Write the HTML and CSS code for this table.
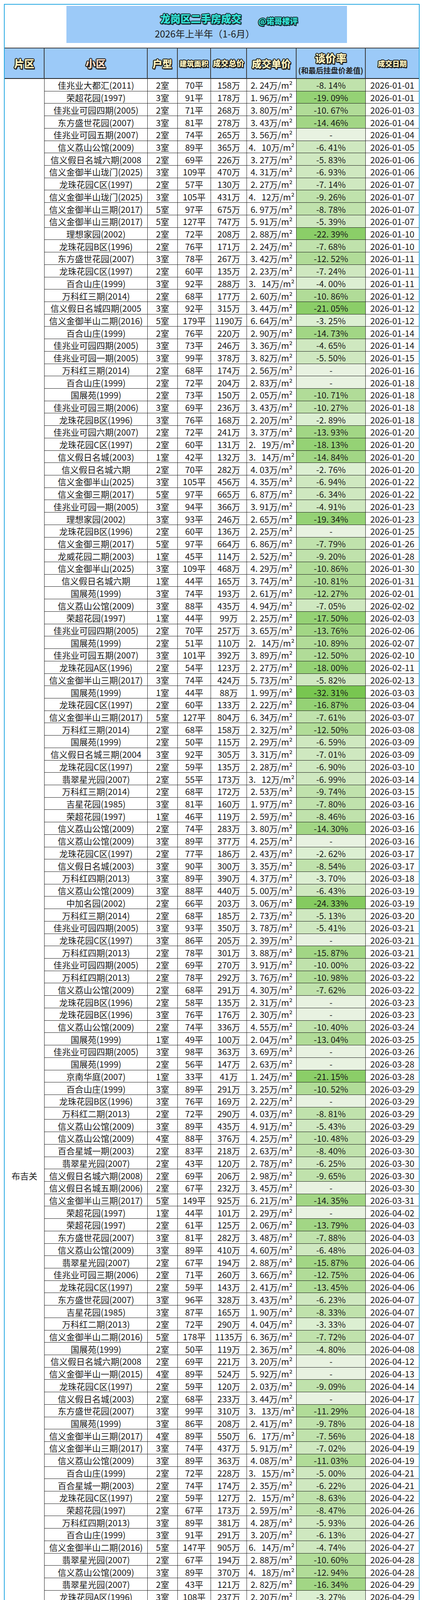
FILE: index.html
```html
<!DOCTYPE html>
<html lang="zh-CN">
<head>
<meta charset="utf-8">
<title>龙岗区二手房成交</title>
<link rel="stylesheet" href="styles.css">
</head>
<body>
<div class="page">
<div class="frame">
<div class="title-area">
  <div class="title-box">
    <div class="title-row"><span class="title">龙岗区二手房成交</span><span class="handle">@诺哥楼评</span></div>
    <div class="subtitle">2026年上半年（1-6月）</div>
  </div>
</div>
<table class="deals">
<thead>
<tr>
<th><span class="hl h26">片区</span></th>
<th><span class="hl h26 pink">小区</span></th>
<th><span class="hl h25">户型</span></th>
<th><span class="hl h18">建筑面积</span></th>
<th><span class="hl h20">成交总价</span></th>
<th><span class="hl h25">成交单价</span></th>
<th class="stack"><span class="hl h27">谈价率</span><span class="hsub">(和最后挂盘价差值)</span></th>
<th class="last"><span class="hl h18">成交日期</span></th>
</tr>
</thead>
<tbody>
<tr><td class="zone" rowspan="177">布吉关</td><td>佳兆业大都汇(2011)</td><td>2室</td><td>70平</td><td>158万</td><td>2. 24万/m²</td><td class="r3">-8. 14%</td><td class="last">2026-01-01</td></tr>
<tr><td>荣超花园(1997)</td><td>3室</td><td>91平</td><td>178万</td><td>1. 96万/m²</td><td class="r6">-19. 09%</td><td class="last">2026-01-01</td></tr>
<tr><td>佳兆业可园四期(2005)</td><td>2室</td><td>71平</td><td>268万</td><td>3. 80万/m²</td><td class="r4">-10. 67%</td><td class="last">2026-01-03</td></tr>
<tr><td>东方盛世花园(2007)</td><td>3室</td><td>81平</td><td>278万</td><td>3. 43万/m²</td><td class="r5">-14. 46%</td><td class="last">2026-01-04</td></tr>
<tr><td>佳兆业可园五期(2007)</td><td>2室</td><td>74平</td><td>265万</td><td>3. 56万/m²</td><td class="rn">-</td><td class="last">2026-01-04</td></tr>
<tr><td>信义荔山公馆(2009)</td><td>3室</td><td>89平</td><td>365万</td><td>4.&nbsp;&nbsp;&nbsp;10万/m²</td><td class="r2">-6. 41%</td><td class="last">2026-01-05</td></tr>
<tr><td>信义假日名城六期(2008</td><td>2室</td><td>69平</td><td>226万</td><td>3. 27万/m²</td><td class="r2">-5. 83%</td><td class="last">2026-01-06</td></tr>
<tr><td>信义金御半山珑门(2025)</td><td>3室</td><td>109平</td><td>470万</td><td>4. 31万/m²</td><td class="r2">-6. 93%</td><td class="last">2026-01-06</td></tr>
<tr><td>龙珠花园C区(1997)</td><td>2室</td><td>57平</td><td>130万</td><td>2. 27万/m²</td><td class="r2">-7. 14%</td><td class="last">2026-01-07</td></tr>
<tr><td>信义金御半山珑门(2025)</td><td>3室</td><td>105平</td><td>431万</td><td>4.&nbsp;&nbsp;&nbsp;12万/m²</td><td class="r3">-9. 26%</td><td class="last">2026-01-07</td></tr>
<tr><td>信义金御半山三期(2017)</td><td>5室</td><td>97平</td><td>675万</td><td>6. 97万/m²</td><td class="r3">-8. 78%</td><td class="last">2026-01-07</td></tr>
<tr><td>信义金御半山三期(2017)</td><td>5室</td><td>127平</td><td>747万</td><td>5. 91万/m²</td><td class="r2">-5. 39%</td><td class="last">2026-01-07</td></tr>
<tr><td>理想家园(2002)</td><td>2室</td><td>72平</td><td>208万</td><td>2. 88万/m²</td><td class="r7">-22. 39%</td><td class="last">2026-01-10</td></tr>
<tr><td>龙珠花园B区(1996)</td><td>2室</td><td>76平</td><td>171万</td><td>2. 24万/m²</td><td class="r3">-7. 68%</td><td class="last">2026-01-10</td></tr>
<tr><td>东方盛世花园(2007)</td><td>3室</td><td>78平</td><td>267万</td><td>3. 42万/m²</td><td class="r4">-12. 52%</td><td class="last">2026-01-11</td></tr>
<tr><td>龙珠花园C区(1997)</td><td>2室</td><td>60平</td><td>135万</td><td>2. 23万/m²</td><td class="r2">-7. 24%</td><td class="last">2026-01-11</td></tr>
<tr><td>百合山庄(1999)</td><td>3室</td><td>92平</td><td>288万</td><td>3.&nbsp;&nbsp;&nbsp;14万/m²</td><td class="r1">-4. 00%</td><td class="last">2026-01-11</td></tr>
<tr><td>万科红三期(2014)</td><td>2室</td><td>68平</td><td>177万</td><td>2. 60万/m²</td><td class="r4">-10. 86%</td><td class="last">2026-01-12</td></tr>
<tr><td>信义假日名城四期(2005</td><td>3室</td><td>92平</td><td>315万</td><td>3. 44万/m²</td><td class="r7">-21. 05%</td><td class="last">2026-01-12</td></tr>
<tr><td>信义金御半山二期(2016)</td><td>5室</td><td>179平</td><td>1190万</td><td>6. 64万/m²</td><td class="r1">-3. 25%</td><td class="last">2026-01-12</td></tr>
<tr><td>百合山庄(1999)</td><td>2室</td><td>76平</td><td>220万</td><td>2. 90万/m²</td><td class="r5">-14. 73%</td><td class="last">2026-01-14</td></tr>
<tr><td>佳兆业可园四期(2005)</td><td>3室</td><td>73平</td><td>246万</td><td>3. 36万/m²</td><td class="r2">-4. 65%</td><td class="last">2026-01-14</td></tr>
<tr><td>佳兆业可园一期(2005)</td><td>3室</td><td>99平</td><td>378万</td><td>3. 82万/m²</td><td class="r2">-5. 50%</td><td class="last">2026-01-15</td></tr>
<tr><td>万科红三期(2014)</td><td>2室</td><td>68平</td><td>174万</td><td>2. 56万/m²</td><td class="rn">-</td><td class="last">2026-01-16</td></tr>
<tr><td>百合山庄(1999)</td><td>2室</td><td>72平</td><td>204万</td><td>2. 83万/m²</td><td class="rn">-</td><td class="last">2026-01-18</td></tr>
<tr><td>国展苑(1999)</td><td>2室</td><td>73平</td><td>150万</td><td>2. 05万/m²</td><td class="r4">-10. 71%</td><td class="last">2026-01-18</td></tr>
<tr><td>佳兆业可园三期(2006)</td><td>3室</td><td>69平</td><td>236万</td><td>3. 43万/m²</td><td class="r3">-10. 27%</td><td class="last">2026-01-18</td></tr>
<tr><td>龙珠花园B区(1996)</td><td>3室</td><td>76平</td><td>168万</td><td>2. 20万/m²</td><td class="r1">-2. 89%</td><td class="last">2026-01-18</td></tr>
<tr><td>佳兆业可园六期(2007)</td><td>2室</td><td>72平</td><td>241万</td><td>3. 37万/m²</td><td class="r5">-13. 93%</td><td class="last">2026-01-20</td></tr>
<tr><td>龙珠花园C区(1997)</td><td>2室</td><td>60平</td><td>131万</td><td>2.&nbsp;&nbsp;&nbsp;19万/m²</td><td class="r6">-18. 13%</td><td class="last">2026-01-20</td></tr>
<tr><td>信义假日名城(2003)</td><td>1室</td><td>42平</td><td>132万</td><td>3.&nbsp;&nbsp;&nbsp;14万/m²</td><td class="r5">-14. 84%</td><td class="last">2026-01-20</td></tr>
<tr><td>信义假日名城六期</td><td>2室</td><td>70平</td><td>282万</td><td>4. 03万/m²</td><td class="r1">-2. 76%</td><td class="last">2026-01-20</td></tr>
<tr><td>信义金御半山(2025)</td><td>3室</td><td>105平</td><td>456万</td><td>4. 35万/m²</td><td class="r2">-6. 94%</td><td class="last">2026-01-22</td></tr>
<tr><td>信义金御三期(2017)</td><td>5室</td><td>97平</td><td>665万</td><td>6. 87万/m²</td><td class="r2">-6. 34%</td><td class="last">2026-01-22</td></tr>
<tr><td>佳兆业可园一期(2005)</td><td>3室</td><td>94平</td><td>366万</td><td>3. 91万/m²</td><td class="r2">-4. 91%</td><td class="last">2026-01-23</td></tr>
<tr><td>理想家园(2002)</td><td>3室</td><td>93平</td><td>246万</td><td>2. 65万/m²</td><td class="r6">-19. 34%</td><td class="last">2026-01-23</td></tr>
<tr><td>龙珠花园B区(1996)</td><td>2室</td><td>60平</td><td>136万</td><td>2. 25万/m²</td><td class="rn">-</td><td class="last">2026-01-25</td></tr>
<tr><td>信义金御三期(2017)</td><td>5室</td><td>97平</td><td>664万</td><td>6. 86万/m²</td><td class="r3">-7. 79%</td><td class="last">2026-01-26</td></tr>
<tr><td>龙威花园二期(2003)</td><td>1室</td><td>45平</td><td>114万</td><td>2. 52万/m²</td><td class="r3">-9. 20%</td><td class="last">2026-01-28</td></tr>
<tr><td>信义金御半山(2025)</td><td>3室</td><td>109平</td><td>468万</td><td>4. 29万/m²</td><td class="r4">-10. 86%</td><td class="last">2026-01-30</td></tr>
<tr><td>信义假日名城六期</td><td>1室</td><td>44平</td><td>165万</td><td>3. 74万/m²</td><td class="r4">-10. 81%</td><td class="last">2026-01-31</td></tr>
<tr><td>国展苑(1999)</td><td>3室</td><td>74平</td><td>193万</td><td>2. 61万/m²</td><td class="r4">-12. 27%</td><td class="last">2026-02-01</td></tr>
<tr><td>信义荔山公馆(2009)</td><td>3室</td><td>88平</td><td>435万</td><td>4. 94万/m²</td><td class="r2">-7. 05%</td><td class="last">2026-02-02</td></tr>
<tr><td>荣超花园(1997)</td><td>1室</td><td>44平</td><td>99万</td><td>2. 25万/m²</td><td class="r6">-17. 50%</td><td class="last">2026-02-03</td></tr>
<tr><td>佳兆业可园四期(2005)</td><td>2室</td><td>70平</td><td>257万</td><td>3. 65万/m²</td><td class="r5">-13. 76%</td><td class="last">2026-02-06</td></tr>
<tr><td>国展苑(1999)</td><td>2室</td><td>51平</td><td>110万</td><td>2.&nbsp;&nbsp;&nbsp;14万/m²</td><td class="r4">-10. 89%</td><td class="last">2026-02-07</td></tr>
<tr><td>佳兆业可园五期(2007)</td><td>3室</td><td>101平</td><td>392万</td><td>3. 89万/m²</td><td class="r4">-12. 50%</td><td class="last">2026-02-10</td></tr>
<tr><td>龙珠花园A区(1996)</td><td>2室</td><td>54平</td><td>123万</td><td>2. 27万/m²</td><td class="r6">-18. 00%</td><td class="last">2026-02-11</td></tr>
<tr><td>信义金御半山三期(2017)</td><td>3室</td><td>74平</td><td>424万</td><td>5. 73万/m²</td><td class="r2">-5. 82%</td><td class="last">2026-02-13</td></tr>
<tr><td>国展苑(1999)</td><td>1室</td><td>44平</td><td>88万</td><td>1. 99万/m²</td><td class="r11">-32. 31%</td><td class="last">2026-03-03</td></tr>
<tr><td>龙珠花园C区(1997)</td><td>2室</td><td>60平</td><td>133万</td><td>2. 22万/m²</td><td class="r6">-16. 87%</td><td class="last">2026-03-04</td></tr>
<tr><td>信义金御半山三期(2017)</td><td>5室</td><td>127平</td><td>804万</td><td>6. 34万/m²</td><td class="r3">-7. 61%</td><td class="last">2026-03-07</td></tr>
<tr><td>万科红三期(2014)</td><td>2室</td><td>68平</td><td>158万</td><td>2. 32万/m²</td><td class="r4">-12. 50%</td><td class="last">2026-03-08</td></tr>
<tr><td>国展苑(1999)</td><td>2室</td><td>50平</td><td>115万</td><td>2. 29万/m²</td><td class="r2">-6. 59%</td><td class="last">2026-03-09</td></tr>
<tr><td>信义假日名城三期(2004</td><td>3室</td><td>92平</td><td>305万</td><td>3. 31万/m²</td><td class="r2">-7. 01%</td><td class="last">2026-03-09</td></tr>
<tr><td>龙珠花园C区(1997)</td><td>2室</td><td>59平</td><td>135万</td><td>2. 28万/m²</td><td class="r2">-6. 90%</td><td class="last">2026-03-10</td></tr>
<tr><td>翡翠星光园(2007)</td><td>2室</td><td>55平</td><td>173万</td><td>3.&nbsp;&nbsp;&nbsp;12万/m²</td><td class="r2">-6. 99%</td><td class="last">2026-03-14</td></tr>
<tr><td>万科红三期(2014)</td><td>2室</td><td>68平</td><td>172万</td><td>2. 53万/m²</td><td class="r3">-9. 74%</td><td class="last">2026-03-15</td></tr>
<tr><td>吉星花园(1985)</td><td>3室</td><td>81平</td><td>160万</td><td>1. 97万/m²</td><td class="r3">-7. 80%</td><td class="last">2026-03-16</td></tr>
<tr><td>荣超花园(1997)</td><td>1室</td><td>46平</td><td>119万</td><td>2. 59万/m²</td><td class="r3">-8. 46%</td><td class="last">2026-03-16</td></tr>
<tr><td>信义荔山公馆(2009)</td><td>2室</td><td>74平</td><td>283万</td><td>3. 80万/m²</td><td class="r5">-14. 30%</td><td class="last">2026-03-16</td></tr>
<tr><td>信义荔山公馆(2009)</td><td>3室</td><td>89平</td><td>377万</td><td>4. 25万/m²</td><td class="rn">-</td><td class="last">2026-03-16</td></tr>
<tr><td>龙珠花园C区(1997)</td><td>2室</td><td>77平</td><td>186万</td><td>2. 43万/m²</td><td class="r1">-2. 62%</td><td class="last">2026-03-17</td></tr>
<tr><td>信义假日名城(2003)</td><td>3室</td><td>90平</td><td>300万</td><td>3. 35万/m²</td><td class="r3">-8. 54%</td><td class="last">2026-03-17</td></tr>
<tr><td>万科红四期(2013)</td><td>3室</td><td>89平</td><td>390万</td><td>4. 37万/m²</td><td class="r1">-3. 70%</td><td class="last">2026-03-18</td></tr>
<tr><td>信义荔山公馆(2009)</td><td>3室</td><td>88平</td><td>440万</td><td>5. 00万/m²</td><td class="r2">-6. 43%</td><td class="last">2026-03-19</td></tr>
<tr><td>中加名园(2002)</td><td>2室</td><td>66平</td><td>203万</td><td>3. 06万/m²</td><td class="r8">-24. 33%</td><td class="last">2026-03-19</td></tr>
<tr><td>万科红三期(2014)</td><td>2室</td><td>68平</td><td>185万</td><td>2. 73万/m²</td><td class="r2">-5. 13%</td><td class="last">2026-03-20</td></tr>
<tr><td>佳兆业可园四期(2005)</td><td>3室</td><td>93平</td><td>350万</td><td>3. 78万/m²</td><td class="r2">-5. 41%</td><td class="last">2026-03-21</td></tr>
<tr><td>龙珠花园C区(1997)</td><td>3室</td><td>86平</td><td>205万</td><td>2. 39万/m²</td><td class="rn">-</td><td class="last">2026-03-21</td></tr>
<tr><td>万科红四期(2013)</td><td>2室</td><td>78平</td><td>301万</td><td>3. 88万/m²</td><td class="r5">-15. 87%</td><td class="last">2026-03-21</td></tr>
<tr><td>佳兆业可园四期(2005)</td><td>2室</td><td>69平</td><td>270万</td><td>3. 91万/m²</td><td class="r3">-10. 00%</td><td class="last">2026-03-22</td></tr>
<tr><td>万科红四期(2013)</td><td>2室</td><td>78平</td><td>292万</td><td>3. 76万/m²</td><td class="r4">-10. 98%</td><td class="last">2026-03-22</td></tr>
<tr><td>信义荔山公馆(2009)</td><td>2室</td><td>68平</td><td>291万</td><td>4. 30万/m²</td><td class="r3">-7. 62%</td><td class="last">2026-03-22</td></tr>
<tr><td>龙珠花园B区(1996)</td><td>2室</td><td>58平</td><td>135万</td><td>2. 31万/m²</td><td class="rn">-</td><td class="last">2026-03-23</td></tr>
<tr><td>龙珠花园B区(1996)</td><td>3室</td><td>76平</td><td>176万</td><td>2. 30万/m²</td><td class="rn">-</td><td class="last">2026-03-23</td></tr>
<tr><td>信义荔山公馆(2009)</td><td>2室</td><td>74平</td><td>336万</td><td>4. 55万/m²</td><td class="r3">-10. 40%</td><td class="last">2026-03-24</td></tr>
<tr><td>国展苑(1999)</td><td>1室</td><td>49平</td><td>100万</td><td>2. 04万/m²</td><td class="r4">-13. 04%</td><td class="last">2026-03-25</td></tr>
<tr><td>佳兆业可园四期(2005)</td><td>3室</td><td>98平</td><td>363万</td><td>3. 69万/m²</td><td class="rn">-</td><td class="last">2026-03-26</td></tr>
<tr><td>国展苑(1999)</td><td>2室</td><td>56平</td><td>147万</td><td>2. 63万/m²</td><td class="rn">-</td><td class="last">2026-03-28</td></tr>
<tr><td>京南华庭(2007)</td><td>1室</td><td>33平</td><td>41万</td><td>1. 24万/m²</td><td class="r7">-21. 15%</td><td class="last">2026-03-28</td></tr>
<tr><td>百合山庄(1999)</td><td>3室</td><td>89平</td><td>291万</td><td>3. 25万/m²</td><td class="r4">-10. 52%</td><td class="last">2026-03-29</td></tr>
<tr><td>龙珠花园B区(1996)</td><td>3室</td><td>76平</td><td>169万</td><td>2. 22万/m²</td><td class="rn">-</td><td class="last">2026-03-29</td></tr>
<tr><td>万科红二期(2013)</td><td>2室</td><td>72平</td><td>290万</td><td>4. 03万/m²</td><td class="r3">-8. 81%</td><td class="last">2026-03-29</td></tr>
<tr><td>信义荔山公馆(2009)</td><td>3室</td><td>89平</td><td>435万</td><td>4. 91万/m²</td><td class="r2">-5. 43%</td><td class="last">2026-03-29</td></tr>
<tr><td>信义荔山公馆(2009)</td><td>4室</td><td>88平</td><td>376万</td><td>4. 25万/m²</td><td class="r3">-10. 48%</td><td class="last">2026-03-29</td></tr>
<tr><td>百合星城一期(2003)</td><td>2室</td><td>83平</td><td>218万</td><td>2. 63万/m²</td><td class="r3">-8. 40%</td><td class="last">2026-03-30</td></tr>
<tr><td>翡翠星光园(2007)</td><td>2室</td><td>43平</td><td>120万</td><td>2. 78万/m²</td><td class="r2">-6. 25%</td><td class="last">2026-03-30</td></tr>
<tr><td>信义假日名城六期(2008)</td><td>2室</td><td>69平</td><td>206万</td><td>2. 98万/m²</td><td class="r3">-9. 65%</td><td class="last">2026-03-30</td></tr>
<tr><td>信义假日名城五期(2006)</td><td>2室</td><td>67平</td><td>232万</td><td>3. 45万/m²</td><td class="rn">-</td><td class="last">2026-03-30</td></tr>
<tr><td>信义金御半山三期(2017)</td><td>5室</td><td>149平</td><td>925万</td><td>6. 21万/m²</td><td class="r5">-14. 35%</td><td class="last">2026-03-31</td></tr>
<tr><td>荣超花园(1997)</td><td>1室</td><td>44平</td><td>101万</td><td>2. 29万/m²</td><td class="rn">-</td><td class="last">2026-04-02</td></tr>
<tr><td>荣超花园(1997)</td><td>2室</td><td>61平</td><td>125万</td><td>2. 06万/m²</td><td class="r5">-13. 79%</td><td class="last">2026-04-03</td></tr>
<tr><td>东方盛世花园(2007)</td><td>3室</td><td>81平</td><td>282万</td><td>3. 48万/m²</td><td class="r3">-7. 88%</td><td class="last">2026-04-03</td></tr>
<tr><td>信义荔山公馆(2009)</td><td>3室</td><td>89平</td><td>410万</td><td>4. 60万/m²</td><td class="r2">-6. 48%</td><td class="last">2026-04-03</td></tr>
<tr><td>翡翠星光园(2007)</td><td>2室</td><td>67平</td><td>194万</td><td>2. 88万/m²</td><td class="r5">-15. 87%</td><td class="last">2026-04-06</td></tr>
<tr><td>佳兆业可园三期(2006)</td><td>2室</td><td>71平</td><td>260万</td><td>3. 66万/m²</td><td class="r4">-12. 75%</td><td class="last">2026-04-06</td></tr>
<tr><td>龙珠花园C区(1997)</td><td>2室</td><td>59平</td><td>143万</td><td>2. 41万/m²</td><td class="r4">-13. 45%</td><td class="last">2026-04-06</td></tr>
<tr><td>东方盛世花园(2007)</td><td>3室</td><td>96平</td><td>328万</td><td>3. 43万/m²</td><td class="r2">-6. 23%</td><td class="last">2026-04-07</td></tr>
<tr><td>吉星花园(1985)</td><td>3室</td><td>87平</td><td>165万</td><td>1. 90万/m²</td><td class="r3">-8. 33%</td><td class="last">2026-04-07</td></tr>
<tr><td>万科红二期(2013)</td><td>2室</td><td>72平</td><td>290万</td><td>4. 04万/m²</td><td class="r1">-3. 33%</td><td class="last">2026-04-07</td></tr>
<tr><td>信义金御半山二期(2016)</td><td>5室</td><td>178平</td><td>1135万</td><td>6. 36万/m²</td><td class="r3">-7. 72%</td><td class="last">2026-04-07</td></tr>
<tr><td>国展苑(1999)</td><td>2室</td><td>50平</td><td>119万</td><td>2. 36万/m²</td><td class="r2">-4. 80%</td><td class="last">2026-04-08</td></tr>
<tr><td>信义假日名城六期(2008</td><td>2室</td><td>69平</td><td>221万</td><td>3. 20万/m²</td><td class="rn">-</td><td class="last">2026-04-12</td></tr>
<tr><td>信义金御半山一期(2015)</td><td>4室</td><td>89平</td><td>524万</td><td>5. 92万/m²</td><td class="rn">-</td><td class="last">2026-04-13</td></tr>
<tr><td>龙珠花园C区(1997)</td><td>2室</td><td>59平</td><td>120万</td><td>2. 03万/m²</td><td class="r3">-9. 09%</td><td class="last">2026-04-14</td></tr>
<tr><td>信义假日名城(2003)</td><td>2室</td><td>68平</td><td>233万</td><td>3. 44万/m²</td><td class="rn">-</td><td class="last">2026-04-17</td></tr>
<tr><td>东方盛世花园(2007)</td><td>3室</td><td>99平</td><td>310万</td><td>3.&nbsp;&nbsp;&nbsp;13万/m²</td><td class="r4">-11. 29%</td><td class="last">2026-04-18</td></tr>
<tr><td>国展苑(1999)</td><td>3室</td><td>86平</td><td>208万</td><td>2. 41万/m²</td><td class="r3">-9. 78%</td><td class="last">2026-04-18</td></tr>
<tr><td>信义金御半山三期(2017)</td><td>4室</td><td>89平</td><td>550万</td><td>6.&nbsp;&nbsp;&nbsp;17万/m²</td><td class="r3">-7. 56%</td><td class="last">2026-04-18</td></tr>
<tr><td>信义金御半山三期(2017)</td><td>3室</td><td>74平</td><td>437万</td><td>5. 91万/m²</td><td class="r2">-7. 02%</td><td class="last">2026-04-19</td></tr>
<tr><td>信义荔山公馆(2009)</td><td>3室</td><td>89平</td><td>363万</td><td>4. 08万/m²</td><td class="r4">-11. 03%</td><td class="last">2026-04-19</td></tr>
<tr><td>百合山庄(1999)</td><td>2室</td><td>72平</td><td>228万</td><td>3.&nbsp;&nbsp;&nbsp;15万/m²</td><td class="r2">-5. 00%</td><td class="last">2026-04-21</td></tr>
<tr><td>百合星城一期(2003)</td><td>2室</td><td>74平</td><td>174万</td><td>2. 35万/m²</td><td class="r2">-6. 22%</td><td class="last">2026-04-21</td></tr>
<tr><td>龙珠花园C区(1997)</td><td>2室</td><td>59平</td><td>127万</td><td>2.&nbsp;&nbsp;&nbsp;15万/m²</td><td class="r3">-8. 63%</td><td class="last">2026-04-22</td></tr>
<tr><td>荣超花园(1997)</td><td>2室</td><td>67平</td><td>173万</td><td>2. 59万/m²</td><td class="r3">-8. 47%</td><td class="last">2026-04-26</td></tr>
<tr><td>万科红四期(2013)</td><td>3室</td><td>89平</td><td>381万</td><td>4. 28万/m²</td><td class="r2">-5. 93%</td><td class="last">2026-04-26</td></tr>
<tr><td>百合山庄(1999)</td><td>3室</td><td>91平</td><td>291万</td><td>3. 20万/m²</td><td class="r2">-6. 13%</td><td class="last">2026-04-27</td></tr>
<tr><td>信义金御半山二期(2016)</td><td>5室</td><td>147平</td><td>905万</td><td>6.&nbsp;&nbsp;&nbsp;14万/m²</td><td class="r2">-4. 74%</td><td class="last">2026-04-27</td></tr>
<tr><td>翡翠星光园(2007)</td><td>2室</td><td>67平</td><td>194万</td><td>2. 88万/m²</td><td class="r4">-10. 60%</td><td class="last">2026-04-28</td></tr>
<tr><td>信义荔山公馆(2009)</td><td>3室</td><td>89平</td><td>370万</td><td>4.&nbsp;&nbsp;&nbsp;18万/m²</td><td class="r4">-12. 94%</td><td class="last">2026-04-28</td></tr>
<tr><td>翡翠星光园(2007)</td><td>2室</td><td>43平</td><td>121万</td><td>2. 82万/m²</td><td class="r5">-16. 34%</td><td class="last">2026-04-29</td></tr>
<tr><td>龙珠花园A区(1996)</td><td>3室</td><td>108平</td><td>237万</td><td>2. 20万/m²</td><td class="r1">-3. 27%</td><td class="last">2026-04-29</td></tr>
<tr><td>龙珠花园A区(1996)</td><td>3室</td><td>78平</td><td>181万</td><td>2. 32万/m²</td><td class="r4">-12. 98%</td><td class="last">2026-04-30</td></tr>
<tr><td>荣超花园(1997)</td><td>2室</td><td>57平</td><td>146万</td><td>2. 54万/m²</td><td class="r2">-5. 81%</td><td class="last">2026-04-30</td></tr>
<tr><td>国展苑(1999)</td><td>3室</td><td>86平</td><td>191万</td><td>2. 22万/m²</td><td class="r6">-18. 81%</td><td class="last">2026-05-01</td></tr>
<tr><td>佳兆业可园一期(2005)</td><td>4室</td><td>70平</td><td>278万</td><td>3. 99万/m²</td><td class="r4">-12. 58%</td><td class="last">2026-05-01</td></tr>
<tr><td>东方盛世花园(2007)</td><td>4室</td><td>96平</td><td>320万</td><td>3. 33万/m²</td><td class="r7">-20. 00%</td><td class="last">2026-05-02</td></tr>
<tr><td>信义金御半山一期(2015)</td><td>5室</td><td>143平</td><td>973万</td><td>6. 80万/m²</td><td class="rn">-</td><td class="last">2026-05-04</td></tr>
<tr><td>万科红一期(2011)</td><td>2室</td><td>62平</td><td>239万</td><td>3. 87万/m²</td><td class="r2">-7. 20%</td><td class="last">2026-05-07</td></tr>
<tr><td>百合星城一期(2003)</td><td>3室</td><td>94平</td><td>261万</td><td>2. 77万/m²</td><td class="r2">-5. 09%</td><td class="last">2026-05-10</td></tr>
<tr><td>东方盛世花园(2007)</td><td>2室</td><td>68平</td><td>213万</td><td>3.&nbsp;&nbsp;&nbsp;15万/m²</td><td class="r4">-10. 88%</td><td class="last">2026-05-10</td></tr>
<tr><td>龙珠花园B区(1996)</td><td>3室</td><td>76平</td><td>178万</td><td>2. 33万/m²</td><td class="r3">-8. 72%</td><td class="last">2026-05-10</td></tr>
<tr><td>信义假日名城四期(2005</td><td>2室</td><td>71平</td><td>253万</td><td>3. 58万/m²</td><td class="r2">-5. 60%</td><td class="last">2026-05-10</td></tr>
<tr><td>佳兆业可园五期(2007)</td><td>4室</td><td>97平</td><td>392万</td><td>4. 04万/m²</td><td class="r4">-12. 50%</td><td class="last">2026-05-11</td></tr>
<tr><td>万科红一期(2011)</td><td>1室</td><td>41平</td><td>146万</td><td>3. 53万/m²</td><td class="r5">-14. 12%</td><td class="last">2026-05-13</td></tr>
<tr><td>百合山庄(1999)</td><td>2室</td><td>77平</td><td>210万</td><td>2. 71万/m²</td><td class="r3">-7. 89%</td><td class="last">2026-05-13</td></tr>
<tr><td>龙珠花园A区(1996)</td><td>3室</td><td>89平</td><td>217万</td><td>2. 43万/m²</td><td class="r3">-8. 91%</td><td class="last">2026-05-14</td></tr>
<tr><td>信义假日名城六期(2008</td><td>2室</td><td>75平</td><td>238万</td><td>3.&nbsp;&nbsp;&nbsp;17万/m²</td><td class="r1">-4. 42%</td><td class="last">2026-05-14</td></tr>
<tr><td>百合山庄(1999)</td><td>2室</td><td>76平</td><td>232万</td><td>3. 05万/m²</td><td class="r1">-3. 33%</td><td class="last">2026-05-16</td></tr>
<tr><td>龙珠花园A区(1996)</td><td>2室</td><td>71平</td><td>166万</td><td>2. 34万/m²</td><td class="r1">-2. 35%</td><td class="last">2026-05-17</td></tr>
<tr><td>信义金御半山一期(2015)</td><td>4室</td><td>89平</td><td>516万</td><td>5. 79万/m²</td><td class="r1">-3. 82%</td><td class="last">2026-05-17</td></tr>
<tr><td>百合山庄(1999)</td><td>3室</td><td>88平</td><td>252万</td><td>2. 85万/m²</td><td class="r2">-5. 97%</td><td class="last">2026-05-18</td></tr>
<tr><td>东方盛世花园(2007)</td><td>2室</td><td>66平</td><td>197万</td><td>2. 96万/m²</td><td class="r8">-24. 31%</td><td class="last">2026-05-18</td></tr>
<tr><td>东方盛世花园(2007)</td><td>4室</td><td>89平</td><td>333万</td><td>3. 73万/m²</td><td class="r1">-4. 31%</td><td class="last">2026-05-18</td></tr>
<tr><td>龙珠花园C区(1997)</td><td>2室</td><td>60平</td><td>152万</td><td>2. 52万/m²</td><td class="r4">-13. 14%</td><td class="last">2026-05-20</td></tr>
<tr><td>百合山庄(1999)</td><td>2室</td><td>79平</td><td>230万</td><td>2. 91万/m²</td><td class="r2">-6. 50%</td><td class="last">2026-05-21</td></tr>
<tr><td>国展苑(1999)</td><td>1室</td><td>49平</td><td>117万</td><td>2. 39万/m²</td><td class="r2">-4. 88%</td><td class="last">2026-05-21</td></tr>
<tr><td>万科红四期(2013)</td><td>3室</td><td>89平</td><td>381万</td><td>4. 27万/m²</td><td class="r2">-4. 75%</td><td class="last">2026-05-23</td></tr>
<tr><td>百合星城一期(2003)</td><td>1室</td><td>36平</td><td>90万</td><td>2. 50万/m²</td><td class="r4">-13. 46%</td><td class="last">2026-05-24</td></tr>
<tr><td>龙珠花园B区(1996)</td><td>2室</td><td>58平</td><td>128万</td><td>2.&nbsp;&nbsp;&nbsp;18万/m²</td><td class="r3">-8. 86%</td><td class="last">2026-05-29</td></tr>
<tr><td>信义金御半山一期(2015)</td><td>4室</td><td>89平</td><td>535万</td><td>6. 02万/m²</td><td class="r3">-7. 76%</td><td class="last">2026-05-29</td></tr>
<tr><td>信义荔山公馆(2009)</td><td>3室</td><td>88平</td><td>428万</td><td>4. 84万/m²</td><td class="r2">-4. 89%</td><td class="last">2026-05-29</td></tr>
<tr><td>国展苑(1999)</td><td>2室</td><td>50平</td><td>115万</td><td>2. 29万/m²</td><td class="r4">-11. 54%</td><td class="last">2026-05-31</td></tr>
<tr><td>东方盛世花园(2007)</td><td>3室</td><td>89平</td><td>320万</td><td>3. 60万/m²</td><td class="rn">-</td><td class="last">2026-06-02</td></tr>
<tr><td>信义金御半山三期(2017)</td><td>4室</td><td>89平</td><td>565万</td><td>6. 34万/m²</td><td class="r2">-7. 38%</td><td class="last">2026-06-03</td></tr>
<tr><td>佳兆业可园七期(2008)</td><td>2室</td><td>87平</td><td>297万</td><td>3. 42万/m²</td><td class="rn">-</td><td class="last">2026-06-04</td></tr>
<tr><td>信义金御半山三期(2017)</td><td>4室</td><td>89平</td><td>518万</td><td>5. 82万/m²</td><td class="r3">-9. 16%</td><td class="last">2026-06-04</td></tr>
<tr><td>吉星花园(1985)</td><td>3室</td><td>86平</td><td>140万</td><td>1. 63万/m²</td><td class="r7">-20. 00%</td><td class="last">2026-06-05</td></tr>
<tr><td>佳兆业可园二期(2005)</td><td>3室</td><td>97平</td><td>334万</td><td>3. 44万/m²</td><td class="r5">-14. 36%</td><td class="last">2026-06-06</td></tr>
<tr><td>百合星城一期(2003)</td><td>2室</td><td>72平</td><td>182万</td><td>2. 54万/m²</td><td class="r2">-6. 67%</td><td class="last">2026-06-06</td></tr>
<tr><td>东方盛世花园(2007)</td><td>3室</td><td>78平</td><td>305万</td><td>3. 90万/m²</td><td class="r3">-7. 58%</td><td class="last">2026-06-08</td></tr>
<tr><td>信义荔山公馆(2009)</td><td>2室</td><td>74平</td><td>325万</td><td>4. 40万/m²</td><td class="r4">-12. 16%</td><td class="last">2026-06-08</td></tr>
<tr><td>京南华庭(2007)</td><td>3室</td><td>84平</td><td>257万</td><td>3. 07万/m²</td><td class="r3">-10. 28%</td><td class="last">2026-06-10</td></tr>
<tr><td>信义金御半山三期(2017)</td><td>5室</td><td>97平</td><td>725万</td><td>7. 49万/m²</td><td class="r2">-7. 05%</td><td class="last">2026-06-13</td></tr>
<tr><td>翡翠星光园(2007)</td><td>2室</td><td>56平</td><td>164万</td><td>2. 94万/m²</td><td class="r2">-5. 32%</td><td class="last">2026-06-17</td></tr>
<tr><td>佳兆业可园三期(2006)</td><td>4室</td><td>120平</td><td>428万</td><td>3. 56万/m²</td><td class="r5">-14. 40%</td><td class="last">2026-06-17</td></tr>
<tr><td>信义金御半山三期(2017)</td><td>3室</td><td>72平</td><td>454万</td><td>6. 30万/m²</td><td class="r1">-3. 40%</td><td class="last">2026-06-18</td></tr>
<tr><td>东方盛世花园(2007)</td><td>1室</td><td>45平</td><td>134万</td><td>2. 98万/m²</td><td class="r3">-9. 73%</td><td class="last">2026-06-25</td></tr>
<tr><td>国展苑(1999)</td><td>2室</td><td>74平</td><td>167万</td><td>2. 26万/m²</td><td class="r2">-7. 22%</td><td class="last">2026-06-25</td></tr>
<tr><td>翡翠星光园(2007)</td><td>2室</td><td>43平</td><td>127万</td><td>2. 94万/m²</td><td class="r2">-5. 93%</td><td class="last">2026-06-26</td></tr>
<tr><td>龙珠花园A区(1996)</td><td>2室</td><td>54平</td><td>117万</td><td>2.&nbsp;&nbsp;&nbsp;16万/m²</td><td class="r3">-10. 00%</td><td class="last">2026-06-27</td></tr>
<tr><td>百合山庄(1999)</td><td>4室</td><td>129平</td><td>387万</td><td>2. 99万/m²</td><td class="r4">-13. 08%</td><td class="last">2026-06-27</td></tr>
<tr><td>翡翠星光园(2007)</td><td>2室</td><td>57平</td><td>173万</td><td>3. 05万/m²</td><td class="r4">-11. 38%</td><td class="last">2026-06-28</td></tr>
<tr><td>翡翠星光园(2007)</td><td>2室</td><td>56平</td><td>166万</td><td>2. 98万/m²</td><td class="r2">-5. 26%</td><td class="last">2026-06-29</td></tr>
<tr><td>国展苑(1999)</td><td>2室</td><td>51平</td><td>117万</td><td>2. 28万/m²</td><td class="r2">-6. 40%</td><td class="last">2026-06-29</td></tr>
<tr class="end"><td>万科红二期(2013)</td><td>3室</td><td>77平</td><td>314万</td><td>4. 09万/m²</td><td class="r8">-23. 46%</td><td class="last">2026-06-30</td></tr>
</tbody>
</table>
</div>
</div>
</body>
</html>
```

FILE: styles.css
```css
html, body {
  margin: 0;
  padding: 0;
  background: #ffffff;
}

.page {
  width: 1080px;
  box-sizing: border-box;
  padding: 10px 6px 4px 10px;
  font-family: "Noto Sans CJK SC", "Noto Sans", sans-serif;
  color: #1a1a1a;
}

.frame {
  width: 1064px;
  box-sizing: border-box;
  border: 2px solid #27a8e2;
  background: #ffffff;
}

/* ---------- title ---------- */
.title-area {
  height: 110px;
  box-sizing: border-box;
  padding: 3px 0 0 158px;
}

.title-box {
  width: 718px;
  height: 95px;
  box-sizing: border-box;
  padding-top: 17px;
  background: #9ccaf8;
  overflow: hidden;
}

.title-row {
  display: flex;
  justify-content: center;
  align-items: flex-start;
  padding-left: 114px;
  height: 30px;
}

.title,
.handle {
  font-weight: 900;
  color: #35e4d6;
  text-shadow:
    2px 0 0 #10262c, -2px 0 0 #10262c, 0 2px 0 #10262c, 0 -2px 0 #10262c,
    1.5px 1.5px 0 #10262c, -1.5px -1.5px 0 #10262c, 1.5px -1.5px 0 #10262c, -1.5px 1.5px 0 #10262c,
    2px 3px 1px #10262c;
}

.title {
  font-size: 26px;
  line-height: 30px;
}

.handle {
  font-size: 20px;
  line-height: 24px;
  margin-left: 43px;
  margin-top: 10px;
}

.subtitle {
  margin-top: 10px;
  padding-right: 10px;
  font-size: 24px;
  line-height: 28px;
  text-align: center;
  color: #1e1e1e;
}

/* ---------- table (grid-laid) ---------- */
.deals {
  display: block;
  width: 1060px;
  border-spacing: 0;
}

.deals thead,
.deals tbody {
  display: grid;
  grid-template-columns: 102px 264px 77px 85px 92px 127px 177px 136px;
}

.deals thead {
  grid-template-rows: 80px;
}

.deals tbody {
  grid-auto-rows: 31.72px;
}

.deals tr {
  display: contents;
}

.deals th,
.deals td {
  display: flex;
  align-items: center;
  justify-content: center;
  box-sizing: border-box;
  padding: 0;
  min-width: 0;
  min-height: 0;
  white-space: nowrap;
  overflow: hidden;
  text-align: center;
}

.deals th {
  background: #9ccaf8;
  border-top: 2px solid #3d3d3d;
  border-bottom: 2px solid #1e1e1e;
  border-right: 2px solid #3a3a3a;
}

.deals th.stack {
  flex-direction: column;
}

.deals th.last {
  border-right: none;
}

.hl {
  display: block;
  font-weight: 900;
  color: #fff2bd;
  line-height: 1.2;
  text-shadow:
    2px 0 0 #141414, -2px 0 0 #141414, 0 2px 0 #141414, 0 -2px 0 #141414,
    1.5px 1.5px 0 #141414, -1.5px -1.5px 0 #141414, 1.5px -1.5px 0 #141414, -1.5px 1.5px 0 #141414,
    2px 3px 1px #141414;
}

.hl.pink { color: #f9dbc6; }
.h27 { font-size: 27px; }
.h26 { font-size: 26px; }
.h25 { font-size: 25px; }
.h20 { font-size: 20px; }
.h18 { font-size: 18.5px; }

.hsub {
  display: block;
  margin-top: 4px;
  font-size: 19px;
  line-height: 22px;
  font-weight: 700;
  color: #222222;
}

.deals td {
  border-right: 1px solid #1c1c1c;
  border-bottom: 1px solid #1c1c1c;
  font-size: 22px;
  line-height: 26px;
  color: #1a1a1a;
}

.deals td.last {
  border-right: none;
}

.deals tr.end td {
  border-bottom: none;
}

.deals td.zone {
  grid-column: 1;
  grid-row: 1 / span 177;
  border-bottom: none;
  background: #ffffff;
}

/* negotiation-rate colour scale */
.rn { background: #e8f2e1; }
.r1 { background: #dcefd2; }
.r2 { background: #cfe8c0; }
.r3 { background: #c0e2ac; }
.r4 { background: #b1dc98; }
.r5 { background: #a2d685; }
.r6 { background: #95d275; }
.r7 { background: #8bce68; }
.r8 { background: #85cb60; }
.r11 { background: #78c650; }
```
